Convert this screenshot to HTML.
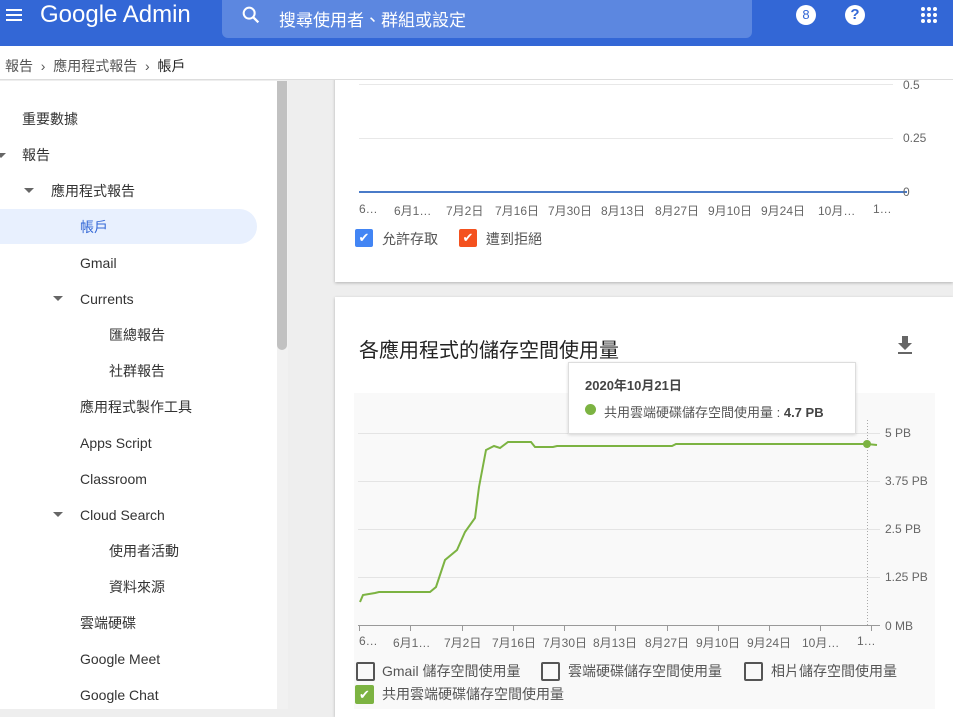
<!DOCTYPE html>
<html><head><meta charset="utf-8"><style>
*{margin:0;padding:0;box-sizing:border-box}
body{width:953px;height:709px;overflow:hidden;background:#eee;font-family:"Liberation Sans","Noto Sans CJK TC",sans-serif;position:relative;color:#333}
.a{position:absolute;white-space:nowrap}
#hdr{left:0;top:0;width:953px;height:46px;background:#3367d6;z-index:5}
#bc{left:0;top:46px;width:953px;height:34px;background:#fff;border-bottom:1px solid #ddd;z-index:5}
.z{z-index:6}
#side{left:0;top:81px;width:277px;height:628px;background:#fff}
.s{font-size:14px;color:#333;line-height:16px}
.car{width:0;height:0;border-left:5px solid transparent;border-right:5px solid transparent;border-top:5px solid #666}
.card{background:#fff;box-shadow:0 1px 3px rgba(0,0,0,.25)}
.ax{font-size:12px;color:#666}
.cb{width:18px;height:18px;border-radius:2px}
.lg{font-size:14px;color:#555}
</style></head><body>
<div class="a card" style="left:335px;top:70px;width:618px;height:212px"></div>
<div class="a" id="hdr"></div>
<div class="a z" style="left:6px;top:9px;width:16px;height:2px;background:#fff;box-shadow:0 5px 0 #fff,0 10px 0 #fff"></div>
<div class="a z" style="left:40px;top:1px;font-size:24px;color:#fff">Google Admin</div>
<div class="a z" style="left:222px;top:0;width:530px;height:38px;background:#5c87e0;border-radius:0 0 6px 6px"></div>
<svg class="a z" style="left:240px;top:4px" width="22" height="22" viewBox="0 0 24 24"><circle cx="10" cy="10" r="6" fill="none" stroke="#fff" stroke-width="2.2"/><path d="M14.5 14.5L20 20" stroke="#fff" stroke-width="2.5"/></svg>
<div class="a z" style="left:279px;top:6px;font-size:17px;color:#fff">搜尋使用者、群組或設定</div>
<div class="a z" style="left:796px;top:5px;width:20px;height:20px;border-radius:50%;background:#fff;color:#3367d6;font-size:13px;text-align:center;line-height:20px">8</div>
<div class="a z" style="left:845px;top:5px;width:20px;height:20px;border-radius:50%;background:#fff;color:#3367d6;font-size:15px;font-weight:bold;text-align:center;line-height:20px">?</div>
<svg class="a z" style="left:920px;top:6px" width="18" height="18"><g fill="#fff"><circle cx="3" cy="3" r="2"/><circle cx="9" cy="3" r="2"/><circle cx="15" cy="3" r="2"/><circle cx="3" cy="9" r="2"/><circle cx="9" cy="9" r="2"/><circle cx="15" cy="9" r="2"/><circle cx="3" cy="15" r="2"/><circle cx="9" cy="15" r="2"/><circle cx="15" cy="15" r="2"/></g></svg>
<div class="a" id="bc"></div>
<div class="a z" style="left:5px;top:56px;font-size:14px;color:#555">報告 &nbsp;›&nbsp; 應用程式報告 &nbsp;›&nbsp; <span style="color:#222">帳戶</span></div>
<div class="a" id="side"></div>
<div class="a" style="left:277px;top:81px;width:11px;height:628px;background:#f1f1f1"></div>
<div class="a" style="left:277px;top:81px;width:10px;height:269px;background:#c1c1c1;border-radius:0 0 5px 5px"></div>
<div class="a" style="left:0;top:209px;width:257px;height:35px;background:#e8f0fe;border-radius:0 18px 18px 0"></div>
<div class="a s" style="left:22px;top:111px">重要數據</div>
<div class="a car" style="left:-4px;top:153px"></div><div class="a s" style="left:22px;top:147px">報告</div>
<div class="a car" style="left:24px;top:188px"></div><div class="a s" style="left:51px;top:183px">應用程式報告</div>
<div class="a s" style="left:80px;top:219px;color:#3367d6">帳戶</div>
<div class="a s" style="left:80px;top:255px">Gmail</div>
<div class="a car" style="left:53px;top:296px"></div><div class="a s" style="left:80px;top:291px">Currents</div>
<div class="a s" style="left:109px;top:327px">匯總報告</div>
<div class="a s" style="left:109px;top:363px">社群報告</div>
<div class="a s" style="left:80px;top:399px">應用程式製作工具</div>
<div class="a s" style="left:80px;top:435px">Apps Script</div>
<div class="a s" style="left:80px;top:471px">Classroom</div>
<div class="a car" style="left:53px;top:512px"></div><div class="a s" style="left:80px;top:507px">Cloud Search</div>
<div class="a s" style="left:109px;top:543px">使用者活動</div>
<div class="a s" style="left:109px;top:579px">資料來源</div>
<div class="a s" style="left:80px;top:615px">雲端硬碟</div>
<div class="a s" style="left:80px;top:651px">Google Meet</div>
<div class="a s" style="left:80px;top:687px">Google Chat</div>

<div class="a" style="left:359px;top:84px;width:534px;height:1px;background:#e8e8e8"></div>
<div class="a" style="left:359px;top:138px;width:534px;height:1px;background:#e8e8e8"></div>
<div class="a" style="left:359px;top:191px;width:548px;height:2px;background:#4a7bc8"></div>
<div class="a ax" style="left:903px;top:78px">0.5</div>
<div class="a ax" style="left:903px;top:131px">0.25</div>
<div class="a ax" style="left:903px;top:185px">0</div>
<div class="a ax" style="left:359px;top:202px">6…</div>
<div class="a ax" style="left:394px;top:202px">6月1…</div>
<div class="a ax" style="left:446px;top:202px">7月2日</div>
<div class="a ax" style="left:495px;top:202px">7月16日</div>
<div class="a ax" style="left:548px;top:202px">7月30日</div>
<div class="a ax" style="left:601px;top:202px">8月13日</div>
<div class="a ax" style="left:655px;top:202px">8月27日</div>
<div class="a ax" style="left:708px;top:202px">9月10日</div>
<div class="a ax" style="left:761px;top:202px">9月24日</div>
<div class="a ax" style="left:818px;top:202px">10月…</div>
<div class="a ax" style="left:873px;top:202px">1…</div>
<div class="a cb" style="left:355px;top:229px;background:#4285f4;color:#fff;font-size:13px;text-align:center;line-height:18px">✔</div>
<div class="a lg" style="left:382px;top:229px">允許存取</div>
<div class="a cb" style="left:459px;top:229px;background:#f4511e;color:#fff;font-size:13px;text-align:center;line-height:18px">✔</div>
<div class="a lg" style="left:486px;top:229px">遭到拒絕</div>

<div class="a card" style="left:335px;top:297px;width:618px;height:420px"></div>
<div class="a" style="left:359px;top:334px;font-size:20px;color:#222">各應用程式的儲存空間使用量</div>
<svg class="a" style="left:896px;top:335px" width="18" height="20"><path d="M6 1h6v7h4l-7 7-7-7h4z M2 17h14v2H2z" fill="#666"/></svg>
<div class="a" style="left:354px;top:393px;width:581px;height:316px;background:#f9f9f9"></div>
<svg class="a" style="left:0;top:0" width="953" height="709">
<g stroke="#e4e4e4" stroke-width="1"><path d="M358 433.5H880M358 481.5H880M358 529.5H880M358 577.5H880"/></g>
<path d="M358 625.5H880" stroke="#999"/>
<g stroke="#999"><path d="M359.5 625V631M410.5 625V631M462.5 625V631M513.5 625V631M564.5 625V631M615.5 625V631M667.5 625V631M718.5 625V631M769.5 625V631M820.5 625V631M871.5 625V631"/></g>
<path d="M867.5 420V625" stroke="#aaa" stroke-dasharray="1 2"/>
<polyline fill="none" stroke="#7cb342" stroke-width="2" points="360,602 363,595 375,593 379,592 430,592 436,587 445,560 457,550 465,532 475,518 479,487 486,450 494,446 500,448 508,442 531,442 535,447 553,447 557,446 672,446 676,444 867,444 877,445"/>
<circle cx="867" cy="444" r="4" fill="#7cb342"/>
</svg>
<div class="a ax" style="left:885px;top:426px">5 PB</div>
<div class="a ax" style="left:885px;top:474px">3.75 PB</div>
<div class="a ax" style="left:885px;top:522px">2.5 PB</div>
<div class="a ax" style="left:885px;top:570px">1.25 PB</div>
<div class="a ax" style="left:885px;top:619px">0 MB</div>
<div class="a ax" style="left:359px;top:634px">6…</div>
<div class="a ax" style="left:393px;top:634px">6月1…</div>
<div class="a ax" style="left:444px;top:634px">7月2日</div>
<div class="a ax" style="left:492px;top:634px">7月16日</div>
<div class="a ax" style="left:543px;top:634px">7月30日</div>
<div class="a ax" style="left:593px;top:634px">8月13日</div>
<div class="a ax" style="left:645px;top:634px">8月27日</div>
<div class="a ax" style="left:696px;top:634px">9月10日</div>
<div class="a ax" style="left:747px;top:634px">9月24日</div>
<div class="a ax" style="left:802px;top:634px">10月…</div>
<div class="a ax" style="left:857px;top:634px">1…</div>
<div class="a cb" style="left:356px;top:662px;border:2px solid #555;width:19px;height:19px"></div>
<div class="a lg" style="left:382px;top:661px">Gmail 儲存空間使用量</div>
<div class="a cb" style="left:541px;top:662px;border:2px solid #555;width:19px;height:19px"></div>
<div class="a lg" style="left:568px;top:661px">雲端硬碟儲存空間使用量</div>
<div class="a cb" style="left:744px;top:662px;border:2px solid #555;width:19px;height:19px"></div>
<div class="a lg" style="left:771px;top:661px">相片儲存空間使用量</div>
<div class="a cb" style="left:355px;top:685px;background:#7cb342;color:#fff;font-size:13px;text-align:center;line-height:19px;width:19px;height:19px">✔</div>
<div class="a lg" style="left:382px;top:684px">共用雲端硬碟儲存空間使用量</div>

<div class="a" style="left:568px;top:362px;width:288px;height:72px;background:#fff;border:1px solid #ddd;box-shadow:0 1px 3px rgba(0,0,0,.15)"></div>
<div class="a" style="left:585px;top:375px;font-size:13px;font-weight:bold;color:#444">2020年10月21日</div>
<div class="a" style="left:585px;top:404px;width:11px;height:11px;border-radius:50%;background:#7cb342"></div>
<div class="a" style="left:604px;top:402px;font-size:13px;color:#555">共用雲端硬碟儲存空間使用量 : <b style="color:#444">4.7 PB</b></div>
</body></html>
